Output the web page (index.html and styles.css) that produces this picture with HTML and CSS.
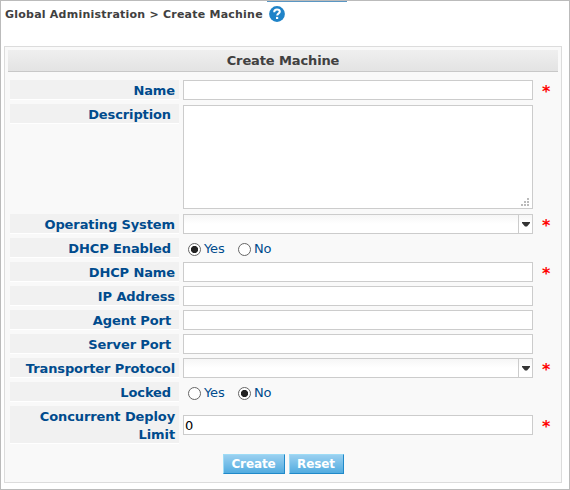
FILE: index.html
```html
<!DOCTYPE html>
<html lang="en">
<head>
<meta charset="utf-8">
<title>Create Machine</title>
<link rel="stylesheet" href="styles.css">
</head>
<body>
<div class="page">
  <div class="tab-edge"></div>
  <header class="breadcrumb">
    <span>Global Administration &gt; Create Machine</span>
    <svg class="help" viewBox="0 0 16 16"><circle cx="8" cy="8" r="7.9" fill="#1f83c8"/><path d="M5.2 6.2C5.2 4.3 6.3 3.6 8 3.6s2.8.8 2.8 2.2C10.800 7.400 8.200 7.500 8.200 9.600" fill="none" stroke="#fff" stroke-width="2"/><rect x="7" y="10.900" width="2.200" height="2.100" fill="#fff"/></svg>
  </header>
  <form class="panel">
    <h1 class="title"><span>Create Machine</span></h1>
    <div class="rows">
      <div class="row"><div class="label"><span>Name</span></div><div class="field"></div><span class="req">*</span></div>
      <div class="row tall"><div class="label optional"><span>Description</span></div><div class="field area"><svg class="grip" viewBox="0 0 8 8"><path d="M6 0h2v2H6zM3 3h2v2H3zM6 3h2v2H6zM0 6h2v2H0zM3 6h2v2H3zM6 6h2v2H6z" fill="#bbb"/></svg></div></div>
      <div class="row"><div class="label"><span>Operating System</span></div><div class="field select"><div class="arrow"><svg viewBox="0 0 8 5"><path d="M0 0h8v1L5 4.500H3L0 1z" fill="#333"/></svg></div></div><span class="req">*</span></div>
      <div class="row"><div class="label optional"><span>DHCP Enabled</span></div><div class="radios"><i class="radio on"></i><span class="yes">Yes</span><i class="radio"></i><span>No</span></div></div>
      <div class="row"><div class="label"><span>DHCP Name</span></div><div class="field"></div><span class="req">*</span></div>
      <div class="row"><div class="label"><span>IP Address</span></div><div class="field"></div></div>
      <div class="row"><div class="label optional"><span>Agent Port</span></div><div class="field"></div></div>
      <div class="row"><div class="label optional"><span>Server Port</span></div><div class="field"></div></div>
      <div class="row"><div class="label"><span>Transporter Protocol</span></div><div class="field select"><div class="arrow"><svg viewBox="0 0 8 5"><path d="M0 0h8v1L5 4.500H3L0 1z" fill="#333"/></svg></div></div><span class="req">*</span></div>
      <div class="row"><div class="label optional"><span>Locked</span></div><div class="radios"><i class="radio"></i><span class="yes">Yes</span><i class="radio on"></i><span>No</span></div></div>
      <div class="row double"><div class="label"><span>Concurrent Deploy<br>Limit</span></div><div class="field">0</div><span class="req">*</span></div>
    </div>
    <div class="actions"><button type="button" class="create">Create</button><button type="button" class="reset">Reset</button></div>
  </form>
</div>
</body>
</html>
```
FILE: styles.css
```css
* { box-sizing: border-box; }
body {
  margin: 0;
  background: #fff;
  font: 13px/18px "DejaVu Sans", Verdana, sans-serif;
  color: #004b8d;
}
.page {
  position: relative;
  width: 570px;
  height: 490px;
  padding: 3px 7px 0 3px;
  border: 1px solid #bbb;
}
.tab-edge {
  position: absolute;
  left: 266px;
  top: 0;
  width: 80px;
  height: 1px;
  background: #5a96c3;
}
.breadcrumb {
  display: flex;
  align-items: center;
  gap: 6px;
  height: 42px;
  padding: 0 0 22px 1px;
  font-size: 11px;
  font-weight: bold;
  letter-spacing: 0.230px;
  color: #404040;
}
.breadcrumb span { padding-top: 2px; }
.help { width: 16px; height: 16px; }
.panel {
  height: 437px;
  width: 558px;
  padding: 3px;
  border: 1px solid #dcdcdc;
  background: #f9f9f9;
}
.title {
  margin: 0;
  height: 22px;
  font-size: 13px;
  line-height: 21px;
  letter-spacing: -0.120px;
  text-align: center;
  color: #404040;
  background: linear-gradient(#efefef, #e3e3e3);
  border-bottom: 1px solid #c8c8c8;
}
.rows {
  display: flex;
  flex-direction: column;
  gap: 4px;
  padding: 8px 2px 0;
}
.row {
  display: flex;
  gap: 4px;
  height: 20px;
  align-items: center;
}
.row.tall { height: 106px; align-items: flex-start; }
.row.double { height: 38px; }
.label {
  width: 169px;
  height: 20px;
  padding: 2px 4px 0 0;
  text-align: right;
  font-weight: bold;
  letter-spacing: -0.110px;
  background: #f1f1f1;
  border-bottom: 1px solid #fff;
}
.double .label { height: 38px; }
.optional { padding-right: 8px; }
.field {
  width: 350px;
  height: 20px;
  padding: 1px 0 0 1px;
  border: 1px solid #ccc;
  background: #fff;
  color: #000;
}
.area {
  display: flex;
  justify-content: flex-end;
  align-items: flex-end;
  height: 104px;
  margin-top: 1px;
  padding: 0 3px 2px 0;
}
.grip { width: 8px; height: 8px; }
.select {
  display: flex;
  justify-content: flex-end;
  padding: 0;
  background: linear-gradient(#f6f6f6, #fff 9px);
}
.arrow {
  display: flex;
  align-items: center;
  justify-content: center;
  width: 14px;
  border-left: 1px solid #ccc;
}
.arrow svg { width: 8px; height: 5px; margin-top: 1px; }
.req {
  margin: 4px 0 0 5px;
  font-size: 16px;
  font-weight: bold;
  color: #f00;
}
.radios { display: flex; align-items: center; padding: 1px 0 0 5px; }
.radio {
  width: 13px;
  height: 13px;
  margin: 1px 3px 0 0;
  border: 1px solid #666;
  border-radius: 50%;
  background: #fff;
}
.radio.on { background: radial-gradient(circle, #222 3.200px, #fff 4px); }
.radios span { padding-top: 1px; letter-spacing: -0.100px; }
.radios .yes { width: 34px; }
.actions {
  display: flex;
  gap: 4px;
  justify-content: center;
  padding-top: 10px;
}
button {
  height: 20px;
  padding: 1px 0 0;
  border: 1px solid;
  border-color: #9edcf6 #2089c9 #2089c9 #9edcf6;
  background: linear-gradient(#9ad0f0, #52ace0);
  font: bold 12px/17px "DejaVu Sans", Verdana, sans-serif;
  letter-spacing: -0.100px;
  color: #fff;
}
.create { width: 62px; }
.reset { width: 55px; }
```
